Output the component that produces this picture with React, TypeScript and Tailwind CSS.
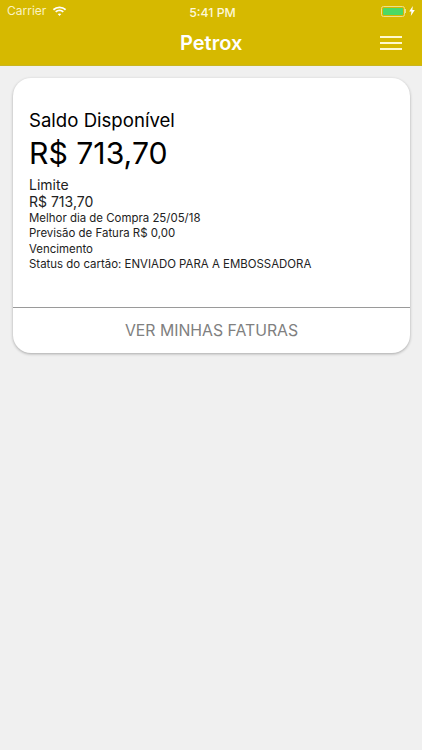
// Petrox card balance screen
const sans = "font-['Inter','Liberation_Sans',sans-serif]";

function Wifi() {
  return (
    <svg width="15" height="11" viewBox="0 0 15 11" fill="white">
      <path d="M7.5 2.2c2.1 0 4 .8 5.5 2.2l1.2-1.3A9.7 9.7 0 0 0 7.5.4 9.7 9.7 0 0 0 .8 3.1L2 4.4a8 8 0 0 1 5.5-2.2z" />
      <path d="M7.5 5.3c1.2 0 2.3.4 3.2 1.3l1.2-1.3a6.4 6.4 0 0 0-8.8 0l1.2 1.3c.9-.9 2-1.3 3.2-1.3z" />
      <path d="M7.5 7.4c-.7 0-1.3.3-1.8.7l1.8 2 1.8-2c-.5-.4-1.1-.7-1.800-.7z" />
    </svg>
  );
}

function Battery() {
  return (
    <div className="flex items-center gap-[3px]">
      <div className="flex items-center">
        <div className="w-[24px] h-[11px] rounded-[2.5px] border border-[#eee08a] p-[1px]">
          <div className="w-full h-full rounded-[1px] bg-[#4cd964]" />
        </div>
        <div className="w-[1px] h-[4px] bg-[#eee08a]" />
      </div>
      <svg width="6" height="10" viewBox="0 0 6 10" fill="white">
        <path d="M3.8 0 .2 5.6h2.2L1.8 10l4-6.100H3.4z" />
      </svg>
    </div>
  );
}

function Header() {
  return (
    <header className="bg-[#d6b900] h-[66px] border-b border-[#c9b520] flex flex-col text-white">
      <div className="h-[22px] px-[7px] flex items-center justify-between relative">
        <div className="flex items-center gap-[6px] text-[12px] text-[#fbf3c0]">
          <span>Carrier</span>
          <Wifi />
        </div>
        <span className="absolute left-[3px] right-0 top-[4px] text-center text-[12.3px] font-medium text-[#fdf8d8]">5:41 PM</span>
        <Battery />
      </div>
      <div className="flex-1 flex items-center justify-between pl-[180px] pr-[20px] pb-[1px]">
        <h1 className="text-[20px] font-semibold leading-none">Petrox</h1>
        <div className="flex flex-col gap-[4px]">
          <div className="w-[22px] h-[2px] bg-[#fff9cf]" />
          <div className="w-[22px] h-[2px] bg-[#fff9cf]" />
          <div className="w-[22px] h-[2px] bg-[#fff9cf]" />
        </div>
      </div>
    </header>
  );
}

export default function App() {
  return (
    <div className={`w-[422px] h-[750px] bg-[#f0f0f0] overflow-hidden ${sans}`}>
      <Header />
      <main className="pl-[13px] pr-[12px] pt-[12px]">
        <section className="bg-white rounded-[18px] shadow-[0_1px_3px_rgba(0,0,0,0.3)] h-[275px] flex flex-col">
          <div className="flex-1 pl-[16px] pt-[30px] text-black">
            <p className="text-[18.6px] leading-[24px]">Saldo Disponível</p>
            <p className="text-[30.2px] leading-[40px] mt-[1px]">R$ 713,70</p>
            <p className="text-[14px] leading-[16px] mt-[4px] text-[#222]">Limite</p>
            <p className="text-[14px] leading-[16px] mt-[1px] text-[#222]">R$ 713,70</p>
            <div className="text-[11.45px] leading-[15.3px] mt-[1px] text-[#222]">
              <p>Melhor dia de Compra 25/05/18</p>
              <p>Previsão de Fatura R$ 0,00</p>
              <p>Vencimento</p>
              <p>Status do cartão: ENVIADO PARA A EMBOSSADORA</p>
            </div>
          </div>
          <button className="h-[46px] border-t border-[#9a9a9a] text-[15.8px] text-[#808080] text-center">
            VER MINHAS FATURAS
          </button>
        </section>
      </main>
    </div>
  );
}
